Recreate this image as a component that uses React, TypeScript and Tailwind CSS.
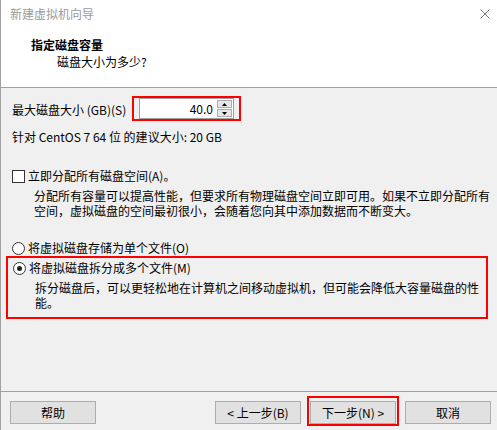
import React, { useState } from 'react'

const Radio = ({ checked }: { checked: boolean }) => (
  <span className="w-[13px] h-[13px] rounded-full border border-[#333] bg-white flex items-center justify-center shrink-0">
    {checked && <span className="w-[5px] h-[5px] rounded-full bg-[#222]" />}
  </span>
)

const Button: React.FC<{ label: string }> = ({ label }) => (
  <button className="w-[86px] h-[23px] bg-[#e1e1e1] border border-[#adadad] text-[12px] leading-[16px] text-black">
    {label}
  </button>
)

const App: React.FC = () => {
  const [size] = useState('40.0')

  return (
    <div className="w-[497px] h-[430px] bg-[#f0f0f0] border-l border-[#a0a0a0] flex flex-col text-[12px] leading-[16px] text-black font-['Noto_Sans_CJK_SC',sans-serif]">
      {/* Header */}
      <div className="h-[88px] bg-white border-b border-[#a0a0a0] shrink-0">
        <div className="flex justify-between items-center pt-[6px] pl-[9px] pr-[7px]">
          <span className="text-[#9a9a9a]">新建虚拟机向导</span>
          <svg width="10" height="10" viewBox="0 0 10 10">
            <path d="M0.5 0.5 L9.5 9.5 M9.5 0.5 L0.5 9.5" stroke="#7a7a7a" strokeWidth="1" />
          </svg>
        </div>
        <div className="mt-[15px] pl-[30px] font-bold">指定磁盘容量</div>
        <div className="mt-[1px] pl-[56px]">磁盘大小为多少?</div>
      </div>

      {/* Body */}
      <div className="flex-1 flex flex-col pl-[11px]">
        <div className="mt-[8px] flex items-center h-[25px]">
          <span className="w-[120px] pt-[2px]">最大磁盘大小 (GB)(S)</span>
          <div className="w-[109px] h-[25px] border-2 border-[#ff0000] pl-[5px]">
            <div className="w-[95px] h-[21px] bg-white border border-[#a0a0a0] flex items-center justify-end pr-[1px]">
              <span className="mr-[4px]">{size}</span>
              <div className="w-[15px] h-[17px] flex flex-col gap-[1px]">
                <div className="flex-1 bg-[#e6e6e6] border border-[#adadad] flex items-center justify-center">
                  <svg width="5" height="3" viewBox="0 0 5 3"><path d="M2.5 0 L5 3 L0 3 Z" fill="#000" /></svg>
                </div>
                <div className="flex-1 bg-[#e6e6e6] border border-[#adadad] flex items-center justify-center">
                  <svg width="5" height="3" viewBox="0 0 5 3"><path d="M0 0 L5 0 L2.5 3 Z" fill="#000" /></svg>
                </div>
              </div>
            </div>
          </div>
        </div>

        <div className="mt-[8px]">针对 CentOS 7 64 位 的建议大小: 20 GB</div>

        <div className="mt-[23px] flex items-center gap-[3px]">
          <span className="w-[13px] h-[13px] border border-[#333] bg-white shrink-0" />
          <span>立即分配所有磁盘空间(A)。</span>
        </div>
        <p className="mt-[4px] ml-[22px] w-[458px] leading-[15px] break-all">
          分配所有容量可以提高性能，但要求所有物理磁盘空间立即可用。如果不立即分配所有空间，虚拟磁盘的空间最初很小，会随着您向其中添加数据而不断变大。
        </p>

        <div className="mt-[22px] flex items-center gap-[3px]">
          <Radio checked={false} />
          <span>将虚拟磁盘存储为单个文件(O)</span>
        </div>

        <div className="-ml-[6px] w-[482px] h-[63px] border-2 border-[#ff0000] pl-[5px] pt-[2px]">
          <div className="flex items-center gap-[3px]">
            <Radio checked={true} />
            <span>将虚拟磁盘拆分成多个文件(M)</span>
          </div>
          <p className="mt-[4px] ml-[22px] w-[450px] leading-[15px] break-all">
            拆分磁盘后，可以更轻松地在计算机之间移动虚拟机，但可能会降低大容量磁盘的性能。
          </p>
        </div>
      </div>

      {/* Footer */}
      <div className="h-[39px] shrink-0 border-t border-[#a0a0a0] flex items-start pt-[9px] pl-[9px] pr-[6px]">
        <Button label="帮助" />
        <div className="ml-auto flex gap-[9px]">
          <Button label="< 上一步(B)" />
          <div className="relative">
            <Button label="下一步(N) >" />
            <div className="absolute -left-[3px] -top-[5px] w-[92px] h-[30px] border-2 border-[#ff0000] pointer-events-none" />
          </div>
          <Button label="取消" />
        </div>
      </div>
    </div>
  )
}

export default App
